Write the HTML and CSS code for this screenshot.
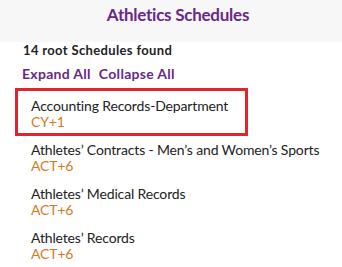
FILE: index.html
```html
<!DOCTYPE html>
<html lang="en">
<head>
    <meta charset="UTF-8">
    <meta name="viewport" content="width=device-width, initial-scale=1.0">
    <title>Athletics Schedules</title>
    <link rel="stylesheet" href="styles.css">
</head>
<body>
    <header class="top">
        <h1>Athletics Schedules</h1>
    </header>

    <div class="summary">14 root Schedules found</div>
    <div class="actions">
        <a href="#">Expand All</a>
        <a href="#">Collapse All</a>
    </div>

    <ul class="schedules">
        <li class="selected">
            <span class="name">Accounting Records-Department</span>
            <span class="period">CY+1</span>
        </li>
        <li>
            <span class="name">Athletes’ Contracts - Men’s and Women’s Sports</span>
            <span class="period">ACT+6</span>
        </li>
        <li>
            <span class="name">Athletes’ Medical Records</span>
            <span class="period">ACT+6</span>
        </li>
        <li>
            <span class="name">Athletes’ Records</span>
            <span class="period">ACT+6</span>
        </li>
    </ul>
</body>
</html>
```

FILE: styles.css
```css
*{
    margin: 0;
    padding: 0;
    box-sizing: border-box;
    list-style: none;
    text-decoration: none;
}

body{
    font-family: Lato, "Open Sans", sans-serif;
    color: #222;
    background-color: #fff;
}

.top{
    height: 42px;
    background-color: #f7f7f7;
    display: flex;
    justify-content: center;
    padding: 5px 0 0 14px;
}

.top h1{
    font-size: 17px;
    line-height: 20px;
    font-weight: 700;
    letter-spacing: -0.25px;
    color: #6a2887;
}

.summary{
    font-size: 13px;
    font-weight: 700;
    line-height: 16px;
    letter-spacing: 0.35px;
    padding-left: 23px;
}

.actions{
    display: flex;
    gap: 8px;
    padding-left: 22px;
    margin-top: 8px;
    line-height: 16px;
}

.actions a{
    font-size: 14px;
    font-weight: 700;
    letter-spacing: 0.3px;
    color: #6a2887;
}

.schedules{
    margin-top: 8px;
    padding-left: 17px;
}

.schedules li{
    display: flex;
    flex-direction: column;
    width: 229px;
    height: 44px;
    padding: 8px 14px 4px;
    line-height: 16px;
    font-size: 14px;
    letter-spacing: -0.15px;
    white-space: nowrap;
}

.schedules li.selected{
    outline: 3px solid #e2242c;
    outline-offset: -1px;
}

.period{
    color: #d5791f;
}
```
